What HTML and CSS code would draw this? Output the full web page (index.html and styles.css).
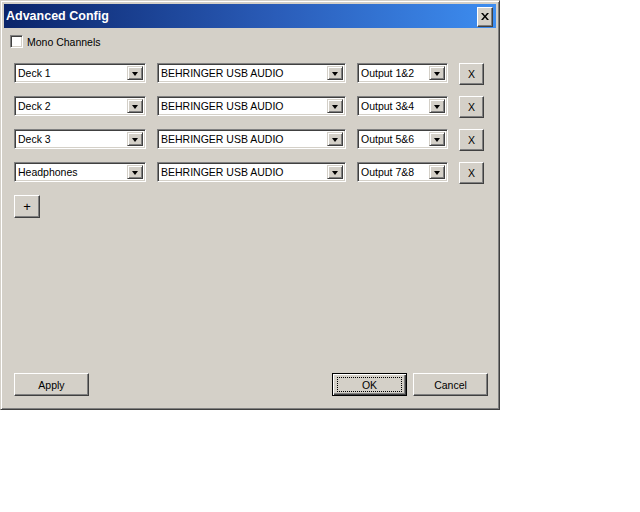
FILE: index.html
```html
<!DOCTYPE html>
<html lang="en">
<head>
    <meta charset="UTF-8">
    <title>Advanced Config</title>
    <link rel="stylesheet" href="styles.css">
</head>
<body>
    <div class="window">
        <div class="titlebar">
            <span class="title">Advanced Config</span>
            <button class="close" type="button">
                <svg width="8" height="7" viewBox="0 0 8 7">
                    <path d="M0 0h2l2 2.5L6 0h2L5 3.5 8 7H6L4 4.5 2 7H0l3-3.5z" fill="#000"/>
                </svg>
            </button>
        </div>
        <div class="client">
            <label class="check">
                <span class="box"></span>
                Mono Channels
            </label>

            <!-- one row per output channel -->
            <div class="channels">
                <div class="channel">
                    <div class="combo name"><span class="value">Deck 1</span><span class="arrow"></span></div>
                    <div class="combo device"><span class="value">BEHRINGER USB AUDIO</span><span class="arrow"></span></div>
                    <div class="combo output"><span class="value">Output 1&amp;2</span><span class="arrow"></span></div>
                    <button class="btn remove" type="button">X</button>
                </div>
                <div class="channel">
                    <div class="combo name"><span class="value">Deck 2</span><span class="arrow"></span></div>
                    <div class="combo device"><span class="value">BEHRINGER USB AUDIO</span><span class="arrow"></span></div>
                    <div class="combo output"><span class="value">Output 3&amp;4</span><span class="arrow"></span></div>
                    <button class="btn remove" type="button">X</button>
                </div>
                <div class="channel">
                    <div class="combo name"><span class="value">Deck 3</span><span class="arrow"></span></div>
                    <div class="combo device"><span class="value">BEHRINGER USB AUDIO</span><span class="arrow"></span></div>
                    <div class="combo output"><span class="value">Output 5&amp;6</span><span class="arrow"></span></div>
                    <button class="btn remove" type="button">X</button>
                </div>
                <div class="channel">
                    <div class="combo name"><span class="value">Headphones</span><span class="arrow"></span></div>
                    <div class="combo device"><span class="value">BEHRINGER USB AUDIO</span><span class="arrow"></span></div>
                    <div class="combo output"><span class="value">Output 7&amp;8</span><span class="arrow"></span></div>
                    <button class="btn remove" type="button">X</button>
                </div>
            </div>

            <button class="btn add" type="button">+</button>

            <div class="footer">
                <button class="btn wide" type="button">Apply</button>
                <div class="spacer"></div>
                <button class="btn wide default" type="button"><span class="focus">OK</span></button>
                <button class="btn wide" type="button">Cancel</button>
            </div>
        </div>
    </div>
</body>
</html>
```

FILE: styles.css
```css
body {
    margin: 0;
    background: #ffffff;
    font-family: "Liberation Sans", Arial, sans-serif;
    font-size: 10.5px;
    color: #000;
}

/* Classic raised dialog frame */
.window {
    width: 500px;
    height: 410px;
    box-sizing: border-box;
    background: #d4d0c8;
    border: 1px solid;
    border-color: #d4d0c8 #404040 #404040 #d4d0c8;
    box-shadow: inset 1px 1px #ffffff, inset -1px -1px #808080;
    padding: 3px;
    display: flex;
    flex-direction: column;
}

.titlebar {
    height: 24px;
    background: linear-gradient(90deg, #0a246a 0%, #2a5cb8 55%, #3d8df0 100%);
    display: flex;
    align-items: center;
    padding: 0 3px 0 2px;
}

.title {
    flex: 1;
    color: #fff;
    font-weight: bold;
    font-size: 12.5px;
}

.close {
    width: 16px;
    height: 20px;
    padding: 0;
    margin-top: 1px;
    background: #d4d0c8;
    border: 1px solid;
    border-color: #ffffff #404040 #404040 #ffffff;
    box-shadow: inset -1px -1px #808080;
    display: flex;
    align-items: center;
    justify-content: center;
}

.client {
    flex: 1;
    display: flex;
    flex-direction: column;
    padding: 8px 8px 10px 10px;
}

/* Checkbox */
.check {
    display: flex;
    align-items: center;
    gap: 4px;
    height: 13px;
    margin-left: -4px;
    margin-top: -1px;
}

.check .box {
    width: 13px;
    height: 13px;
    box-sizing: border-box;
    background: #fff;
    border: 1px solid;
    border-color: #808080 #ffffff #ffffff #808080;
    box-shadow: inset 1px 1px #404040, inset -1px -1px #d4d0c8;
}

.channels {
    margin-top: 15px;
    display: flex;
    flex-direction: column;
    gap: 11px;
}

.channel {
    display: flex;
    align-items: flex-start;
    height: 22px;
}

/* Drop-down combo box */
.combo {
    height: 20px;
    box-sizing: border-box;
    background: #fff;
    border: 1px solid;
    border-color: #808080 #ffffff #ffffff #808080;
    box-shadow: inset 1px 1px #404040, inset -1px -1px #d4d0c8;
    padding: 2px;
    display: flex;
    align-items: stretch;
    margin-right: 11px;
}

.combo .value {
    flex: 1;
    display: flex;
    align-items: center;
    padding-left: 1px;
    white-space: nowrap;
    overflow: hidden;
}

.combo .arrow {
    width: 16px;
    box-sizing: border-box;
    background: #d4d0c8;
    border: 1px solid;
    border-color: #d4d0c8 #404040 #404040 #d4d0c8;
    box-shadow: inset 1px 1px #ffffff, inset -1px -1px #808080;
    display: flex;
    align-items: center;
    justify-content: center;
}

.combo .arrow::after {
    content: "";
    border-left: 3.5px solid transparent;
    border-right: 3.5px solid transparent;
    border-top: 4px solid #000;
    margin-top: 1px;
}

.combo.name {
    width: 132px;
}

.combo.device {
    width: 189px;
}

.combo.output {
    width: 91px;
}

/* Push buttons */
.btn {
    box-sizing: border-box;
    background: #d4d0c8;
    border: 1px solid;
    border-color: #ffffff #404040 #404040 #ffffff;
    box-shadow: inset -1px -1px #808080;
    font-family: inherit;
    font-size: 10.5px;
    color: #000;
    padding: 0;
    display: flex;
    align-items: center;
    justify-content: center;
}

.btn.remove {
    width: 25px;
    height: 22px;
}

.btn.add {
    width: 26px;
    height: 23px;
    margin-top: 11px;
    font-size: 13px;
}

.footer {
    margin-top: auto;
    display: flex;
    gap: 6px;
}

.footer .spacer {
    flex: 1;
}

.btn.wide {
    width: 75px;
    height: 23px;
}

.btn.default {
    border: 1px solid #000;
    box-shadow: inset 1px 1px #ffffff, inset -1px -1px #404040, inset -2px -2px #808080;
}

.btn .focus {
    width: 65px;
    height: 15px;
    box-sizing: border-box;
    border: 1px dotted #000;
    display: flex;
    align-items: center;
    justify-content: center;
}
```
